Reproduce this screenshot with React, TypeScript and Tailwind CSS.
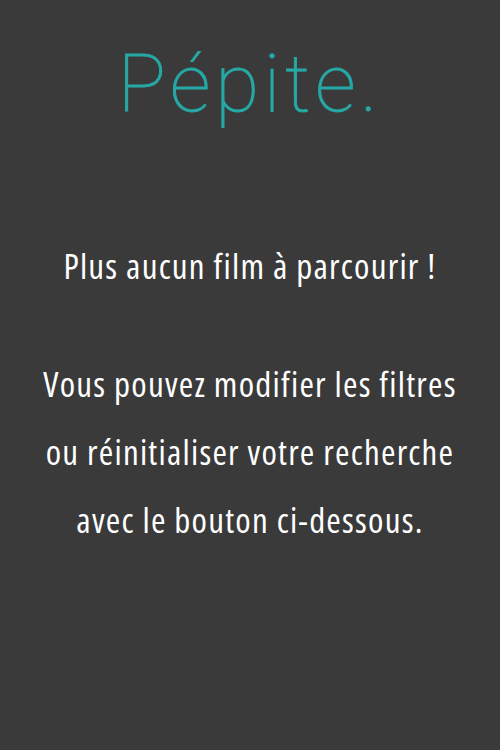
import React from 'react';

const App: React.FC = () => {
  return (
    <div className="w-[500px] h-[750px] bg-[#3a3a3a] flex flex-col items-center">
      <h1 className="mt-[36px] font-['Roboto',sans-serif] font-thin text-[80px] leading-[96px] tracking-[0.06em] text-[#26a9a6] [-webkit-text-stroke:0.9px_#26a9a6]">
        Pépite.
      </h1>

      <div className="mt-[100px] font-['Open_Sans',sans-serif] font-stretch-semi-condensed font-normal tracking-[0.035em] whitespace-nowrap text-white text-center text-[35px] leading-[68px]">
        <p>Plus aucun film à parcourir !</p>
        <p className="mt-[50px]">
          Vous pouvez modifier les filtres
          <br />
          ou réinitialiser votre recherche
          <br />
          avec le bouton ci-dessous.
        </p>
      </div>
    </div>
  );
};

export default App;
